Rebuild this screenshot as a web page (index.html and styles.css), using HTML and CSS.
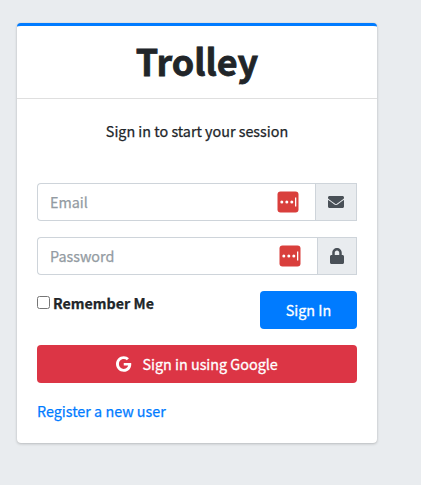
FILE: index.html
```html
<!DOCTYPE html>
<html lang="en">
<head>
<meta charset="utf-8">
<title>Trolley</title>
<link rel="stylesheet" href="styles.css">
</head>
<body>
<main class="card">
  <header class="card-header"><h1 class="brand">Trolley</h1></header>
  <form class="card-body">
    <p class="intro">Sign in to start your session</p>
    <div class="field">
      <div class="control"><span class="placeholder">Email</span>
        <svg class="manager" viewBox="0 0 22 22"><rect class="tile" x=".5" y=".5" width="21" height="21" rx="3"/><circle cx="4.8" cy="11" r="1.5"/><circle cx="9.8" cy="11" r="1.5"/><circle cx="14.8" cy="11" r="1.5"/><rect x="18" y="6.5" width="1.3" height="9"/></svg>
      </div>
      <div class="addon"><svg width="16" height="16" viewBox="0 0 512 512"><path d="M502.3 190.8c3.9-3.1 9.7-.2 9.7 4.7V400c0 26.5-21.5 48-48 48H48c-26.5 0-48-21.5-48-48V195.6c0-5 5.7-7.8 9.7-4.7 22.4 17.4 52.1 39.5 154.1 113.6 21.1 15.4 56.7 47.8 92.2 47.6 35.7.3 72-32.8 92.3-47.6 102-74.1 131.6-96.3 154-113.7zM256 320c23.2.4 56.6-29.2 73.4-41.4 132.7-96.3 142.8-104.7 173.4-128.7 5.8-4.5 9.2-11.5 9.2-18.9v-19c0-26.5-21.5-48-48-48H48c-26.5 0-48 21.5-48 48v19c0 7.4 3.4 14.3 9.2 18.9 30.6 23.9 40.7 32.4 173.4 128.7 16.8 12.2 50.2 41.8 73.4 41.4z"/></svg></div>
    </div>
    <div class="field">
      <div class="control"><span class="placeholder">Password</span>
        <svg class="manager" viewBox="0 0 22 22"><rect class="tile" x=".5" y=".5" width="21" height="21" rx="3"/><circle cx="4.8" cy="11" r="1.5"/><circle cx="9.8" cy="11" r="1.5"/><circle cx="14.8" cy="11" r="1.5"/><rect x="18" y="6.5" width="1.3" height="9"/></svg>
      </div>
      <div class="addon"><svg width="14" height="16" viewBox="0 0 448 512"><path d="M400 224h-24v-72C376 68.2 307.8 0 224 0S72 68.2 72 152v72H48c-26.5 0-48 21.5-48 48v192c0 26.5 21.5 48 48 48h352c26.5 0 48-21.5 48-48V272c0-26.5-21.5-48-48-48zm-104 0H152v-72c0-39.7 32.3-72 72-72s72 32.3 72 72v72z"/></svg></div>
    </div>
    <div class="actions">
      <label class="remember"><input type="checkbox" class="check"><span>Remember Me</span></label>
      <button type="button" class="btn btn-primary">Sign In</button>
    </div>
    <button type="button" class="btn btn-google"><svg width="15.25" height="16" viewBox="0 0 488 512"><path d="M488 261.8C488 403.3 391.1 504 248 504 110.8 504 0 393.2 0 256S110.8 8 248 8c66.8 0 123 24.5 166.3 64.9l-67.5 64.9C258.5 52.6 94.3 116.6 94.3 256c0 86.5 69.1 156.6 153.7 156.6 98.2 0 135-70.4 140.8-106.9H248v-85.3h236.1c2.3 12.7 3.9 24.9 3.9 41.4z"/></svg><span>Sign in using Google</span></button>
    <a class="register" href="#">Register a new user</a>
  </form>
</main>
</body>
</html>
```
FILE: styles.css
```css
* { box-sizing: border-box; }
body {
  margin: 0;
  padding: 23px 17px;
  min-height: 485px;
  background: #e9ecef;
  color: #212529;
  font: 400 14.35px/24px "Noto Sans CJK SC", sans-serif;
  -webkit-text-stroke: .25px currentColor;
}
.card {
  width: 360px;
  height: 420px;
  background: #fff;
  border-top: 3px solid #007bff;
  border-radius: 4px;
  box-shadow: 0 0 1px rgba(0, 0, 0, .125), 0 1px 3px rgba(0, 0, 0, .2);
}
.card-header {
  height: 73px;
  padding-top: 10px;
  border-bottom: 1px solid rgba(0, 0, 0, .125);
  text-align: center;
}
.brand {
  margin: 0;
  font-size: 35.9px;
  line-height: 48px;
  font-weight: 700;
  -webkit-text-stroke: .8px currentColor;
}
.card-body { display: flex; flex-direction: column; padding: 20px; }
.intro { margin: 0 0 40px; text-align: center; }
.field { display: flex; height: 38px; margin-bottom: 16px; }
.control {
  flex: 1;
  display: flex;
  align-items: center;
  justify-content: space-between;
  padding: 0 16px 0 12px;
  border: 1px solid #ced4da;
  border-right: 0;
  border-radius: 4px 0 0 4px;
}
.placeholder { color: #939ba2; }
.manager { width: 22px; height: 22px; fill: #fff; }
.manager .tile { fill: #d93f3c; }
.addon {
  display: flex;
  align-items: center;
  padding: 0 12px;
  background: #e9ecef;
  border: 1px solid #ced4da;
}
.addon svg { fill: #495057; }
.actions { display: flex; justify-content: space-between; height: 38px; margin-bottom: 16px; }
.remember { display: flex; gap: 3px; height: 24px; font-size: 14.25px; font-weight: 700; }
.check { width: 13px; height: 13px; margin: 5px 0 0; }
.btn {
  display: flex;
  align-items: center;
  justify-content: center;
  height: 38px;
  padding: 0;
  border: 0;
  border-radius: 4px;
  color: #fff;
  font: inherit;
  -webkit-text-stroke: .3px currentColor;
}
.btn-primary { width: 97px; background: #007bff; }
.btn-google { gap: 11px; margin-bottom: 16px; background: #dc3545; }
.btn-google svg { fill: #fff; }
.register { align-self: flex-start; color: #007bff; text-decoration: none; }
```
